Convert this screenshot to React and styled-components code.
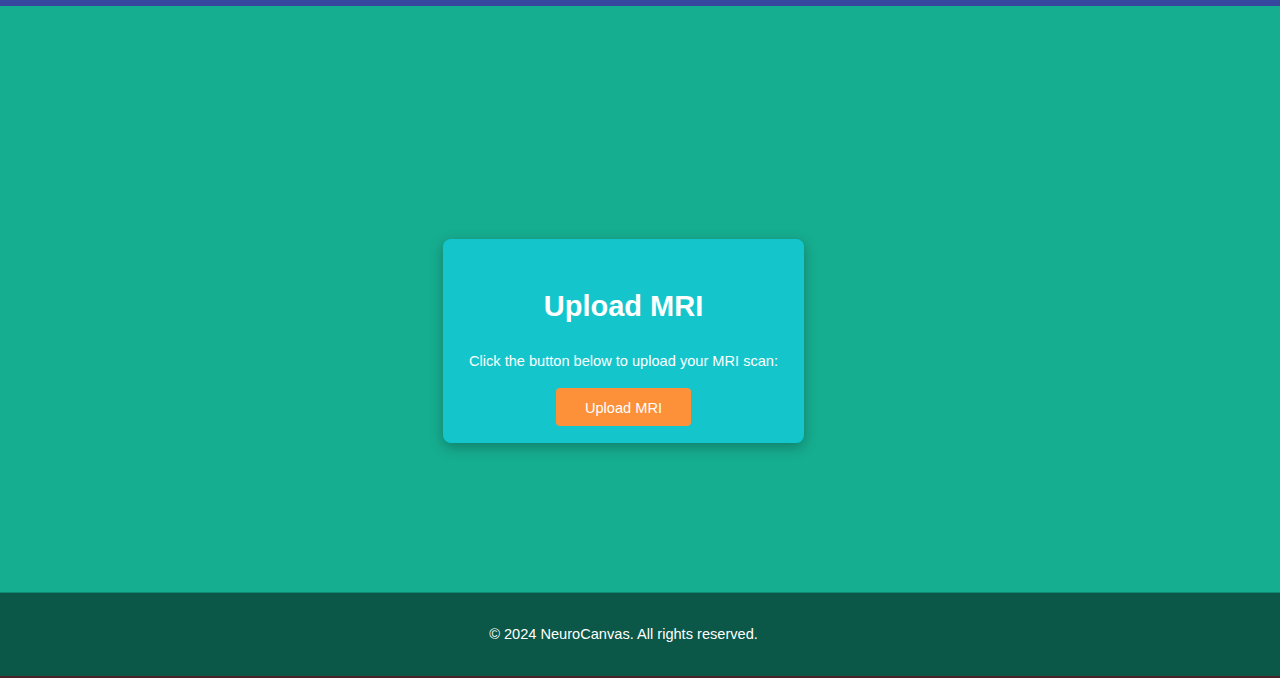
import React from 'react';
import styled, { createGlobalStyle } from 'styled-components';

const GlobalStyle = createGlobalStyle`
  html, body {
    margin: 0;
    padding: 0;
    height: 100%;
  }
  body {
    font-family: "Liberation Sans", Arial, sans-serif;
  }
  #root {
    height: 100%;
  }
`

const Page = styled.div`
  height: 678px;
  display: flex;
  flex-direction: column;
  background: #16ae90;
`
const TopBar = styled.div`
  height: 6px;
  background: #36479d;
  flex-shrink: 0;
`
const Main = styled.main`
  flex: 1;
  display: flex;
  justify-content: center;
  align-items: center;
  padding: 84px 33px 0 0;
`
const Card = styled.div`
  width: 361px;
  box-sizing: border-box;
  padding: 20px 20px 17px;
  background: #14c6cc;
  border-radius: 8px;
  box-shadow: 0 4px 14px rgba(0, 0, 0, 0.28);
  display: flex;
  flex-direction: column;
  align-items: center;
  color: #fff;
`
const Title = styled.h1`
  margin: 31px 0 0;
  font-size: 29px;
  line-height: 32px;
  font-weight: 700;
`
const Text = styled.p`
  margin: 30px 0 18px;
  font-size: 14.6px;
  line-height: 18px;
  white-space: nowrap;
`
const Button = styled.button`
  width: 135px;
  height: 38px;
  padding: 2px 0 0;
  border: none;
  border-radius: 4px;
  background: #fc913a;
  color: #fff;
  font-family: "Liberation Sans", Arial, sans-serif;
  font-size: 14.6px;
  cursor: pointer;
`
const Footer = styled.footer`
  height: 84px;
  flex-shrink: 0;
  background: #0b5748;
  border-top: 1px solid #128a72;
  box-sizing: border-box;
  display: flex;
  align-items: center;
  justify-content: center;
  padding: 0 33px 2px 0;
  color: #fff;
  font-size: 14.6px;
`
const BottomEdge = styled.div`
  height: 2px;
  background: #4a2428;
  flex-shrink: 0;
`

export default function App() {
  return (
    <>
      <GlobalStyle />
      <Page>
        <TopBar />
        <Main>
          <Card>
            <Title>Upload MRI</Title>
            <Text>Click the button below to upload your MRI scan:</Text>
            <Button>Upload MRI</Button>
          </Card>
        </Main>
        <Footer>© 2024 NeuroCanvas. All rights reserved.</Footer>
        <BottomEdge />
      </Page>
    </>
  );
}
